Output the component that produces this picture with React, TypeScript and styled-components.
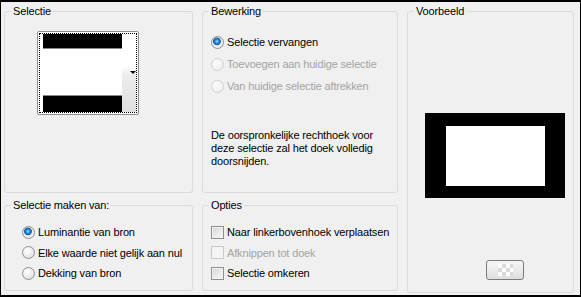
import styled, { createGlobalStyle } from "styled-components";

const GlobalStyle = createGlobalStyle`
  body {
    margin: 0;
    font-family: "Liberation Sans", Tahoma, sans-serif;
    font-size: 11px;
    letter-spacing: -0.15px;
    color: #000;
  }
`;

const bewerking = [
  { id: 1, text: "Selectie vervangen", checked: true, disabled: false },
  { id: 2, text: "Toevoegen aan huidige selectie", checked: false, disabled: true },
  { id: 3, text: "Van huidige selectie aftrekken", checked: false, disabled: true },
];

const bronnen = [
  { id: 1, text: "Luminantie van bron", checked: true },
  { id: 2, text: "Elke waarde niet gelijk aan nul", checked: false },
  { id: 3, text: "Dekking van bron", checked: false },
];

const opties = [
  { id: 1, text: "Naar linkerbovenhoek verplaatsen", disabled: false },
  { id: 2, text: "Afknippen tot doek", disabled: true },
  { id: 3, text: "Selectie omkeren", disabled: false },
];

const App = () => {
  return (
    <Wrapper>
      <GlobalStyle />
      <Group>
        <Legend>Selectie</Legend>
        <Swatch>
          <SwatchInner>
            <SwatchImage>
              <Bar $top />
              <SwatchWhite />
              <Bar />
            </SwatchImage>
            <SwatchStrip>
              <Arrow />
            </SwatchStrip>
          </SwatchInner>
        </Swatch>
      </Group>

      <Group>
        <Legend>Bewerking</Legend>
        <OptionList $top={13} $left={8} $row={22}>
          {bewerking.map(({ id, text, checked, disabled }) => (
            <OptionRow key={id} $disabled={disabled}>
              <Radio $checked={checked} $disabled={disabled} />
              {text}
            </OptionRow>
          ))}
        </OptionList>
        <Note>
          De oorspronkelijke rechthoek voor
          <br />
          deze selectie zal het doek volledig
          <br />
          doorsnijden.
        </Note>
      </Group>

      <PreviewGroup>
        <Legend>Voorbeeld</Legend>
        <Preview>
          <PreviewWhite />
        </Preview>
        <CheckerButton>
          <Checker />
        </CheckerButton>
      </PreviewGroup>

      <Group $small>
        <Legend>Selectie maken van:</Legend>
        <OptionList $top={10} $left={17} $row={20.5}>
          {bronnen.map(({ id, text, checked }) => (
            <OptionRow key={id}>
              <Radio $checked={checked} />
              {text}
            </OptionRow>
          ))}
        </OptionList>
      </Group>

      <Group $small>
        <Legend>Opties</Legend>
        <OptionList $top={10} $left={8} $row={20.5}>
          {opties.map(({ id, text, disabled }) => (
            <OptionRow key={id} $disabled={disabled}>
              <Check $disabled={disabled} />
              {text}
            </OptionRow>
          ))}
        </OptionList>
      </Group>
    </Wrapper>
  );
};
export default App;

const Wrapper = styled.div`
  width: 581px;
  height: 297px;
  box-sizing: border-box;
  border-style: solid;
  border-color: #000;
  border-width: 2px 1px 2px 1px;
  background: #f0f0f0;
  padding: 3px 0 0 3px;
  display: grid;
  grid-template-columns: 189px 196px 167px;
  grid-template-rows: 188px 94px;
  column-gap: 9px;
  row-gap: 6px;
  align-items: start;
`;

const Group = styled.fieldset<{ $small?: boolean }>`
  margin: 0;
  padding: 0;
  min-width: 0;
  box-sizing: border-box;
  height: ${({ $small }) => ($small ? "92px" : "188px")};
  border: 1px solid #d5dde2;
  border-radius: 3px;
`;

const PreviewGroup = styled(Group)`
  grid-column: 3;
  grid-row: 1 / span 2;
  height: 288px;
  display: flex;
  flex-direction: column;
  align-items: flex-start;
`;

const Legend = styled.legend`
  margin-left: 6px;
  padding: 0 2px;
  line-height: 13px;
  font-size: 11px;
`;

const Swatch = styled.div`
  margin: 13px 0 0 32px;
  width: 102px;
  height: 84px;
  box-sizing: border-box;
  border: 1px solid #8e8f8f;
  border-radius: 2px;
  background: #fff;
  padding: 1px;
`;

const SwatchInner = styled.div`
  height: 100%;
  box-sizing: border-box;
  border: 1px dotted #000;
  display: flex;
  padding-left: 3px;
`;

const SwatchImage = styled.div`
  width: 79px;
  display: flex;
  flex-direction: column;
`;

const Bar = styled.div<{ $top?: boolean }>`
  height: ${({ $top }) => ($top ? "14px" : "16px")};
  background: #000;
  ${({ $top }) =>
    $top ? "border-bottom: 1px solid #8a8a8a;" : "border-top: 1px solid #8a8a8a;"}
`;

const SwatchWhite = styled.div`
  flex: 1;
  background: #fff;
`;

const SwatchStrip = styled.div`
  flex: 1;
  display: flex;
  align-items: center;
  justify-content: flex-end;
  background: linear-gradient(to bottom, #fff 0%, #fff 42%, #ececec 52%, #e0e0e0 100%);
`;

const Arrow = styled.span`
  width: 0;
  height: 0;
  border-left: 3px solid transparent;
  border-right: 3px solid transparent;
  border-top: 3px solid #000;
  margin-top: -2px;
`;

const OptionList = styled.div<{ $top: number; $left: number; $row: number }>`
  padding: ${({ $top, $left }) => `${$top}px 0 0 ${$left}px`};
  display: grid;
  grid-auto-rows: ${({ $row }) => `${$row}px`};
`;

const OptionRow = styled.label<{ $disabled?: boolean }>`
  display: flex;
  align-items: center;
  gap: 3px;
  white-space: nowrap;
  color: ${({ $disabled }) => ($disabled ? "#a3a3a3" : "#000")};
`;

const Radio = styled.span<{ $checked?: boolean; $disabled?: boolean }>`
  width: 13px;
  height: 13px;
  flex: none;
  box-sizing: border-box;
  border-radius: 50%;
  border: 1px solid ${({ $disabled }) => ($disabled ? "#d2d2d2" : "#8e8f8f")};
  background: ${({ $checked, $disabled }) =>
    $checked
      ? "radial-gradient(circle at 45% 40%, #a8e0ff 0, #3a9ae6 1.5px, #0c57a8 3.5px, #eaeaea 4.2px, #f6f6f6 100%)"
      : $disabled
      ? "radial-gradient(circle at 35% 30%, #fbfbfb, #ececec)"
      : "radial-gradient(circle at 35% 30%, #ffffff, #d9d9d9)"};
`;

const Check = styled.span<{ $disabled?: boolean }>`
  width: 13px;
  height: 13px;
  flex: none;
  box-sizing: border-box;
  border: 1px solid ${({ $disabled }) => ($disabled ? "#c9c9c9" : "#8e8f8f")};
  background: ${({ $disabled }) =>
    $disabled ? "#f4f4f4" : "linear-gradient(135deg, #d3d3d3 0%, #ececec 60%, #f8f8f8 100%)"};
  box-shadow: inset 0 0 0 1px ${({ $disabled }) => ($disabled ? "#f4f4f4" : "#f2f2f2")};
`;

const Note = styled.p`
  margin: 32px 0 0 8px;
  line-height: 13px;
`;

const Preview = styled.div`
  margin: 95px 0 0 17px;
  width: 140px;
  height: 85px;
  box-sizing: border-box;
  background: #000;
  padding: 13px 20px 12px 21px;
  display: flex;
`;

const PreviewWhite = styled.div`
  flex: 1;
  background: #fff;
`;

const CheckerButton = styled.div`
  margin: 62px 0 0 78px;
  width: 38px;
  height: 20px;
  box-sizing: border-box;
  border: 1px solid #7a7a7a;
  border-radius: 3px;
  background: linear-gradient(to bottom, #f6f6f6, #ebebeb 50%, #dedede);
  display: flex;
  align-items: center;
  justify-content: center;
`;

const Checker = styled.span`
  width: 15px;
  height: 12px;
  background-color: #fff;
  background-image: conic-gradient(#d8d8d8 25%, transparent 25% 50%, #d8d8d8 50% 75%, transparent 75%);
  background-size: 8px 8px;
  opacity: 0.9;
`;
